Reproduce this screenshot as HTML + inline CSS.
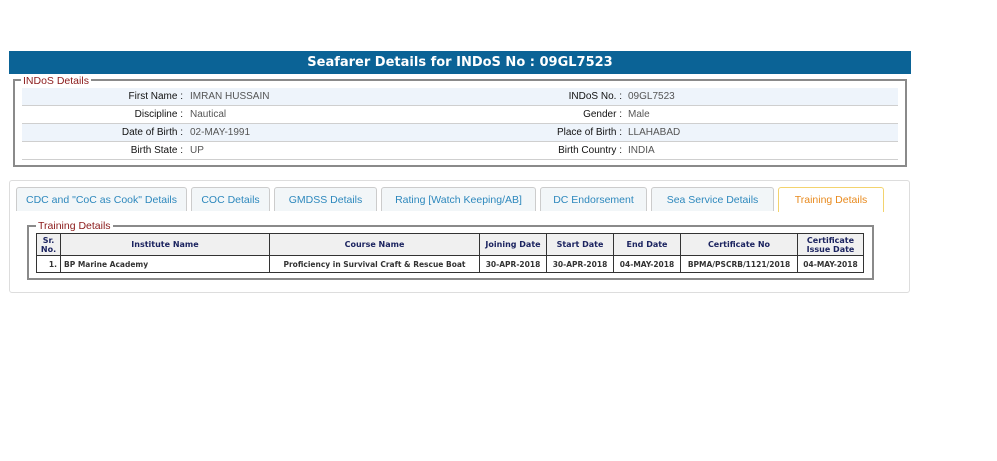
<!DOCTYPE html>
<html><head><meta charset="utf-8"><style>
*{margin:0;padding:0;box-sizing:border-box}
body{width:997px;height:461px;background:#fff;position:relative;font-family:"Liberation Sans",Arial,sans-serif;overflow:hidden}
.a{position:absolute}
.hdr{left:9px;top:51px;width:902px;height:23px;background:#0b6396;color:#fff;font:bold 13px "DejaVu Sans",sans-serif;text-align:center;line-height:23px}
.fs{border:2px solid #8a8a8a}
.leg{background:#fff;color:#8b1a1a;font-size:10.5px;padding:0 2px;line-height:12px}
.row{left:22px;width:876px;height:18px;border-bottom:1px solid #cfcfcf;font-size:10px;line-height:18px}
.row.b{background:#eef4fb}
.lb{position:absolute;text-align:right;color:#111}
.vl{position:absolute;color:#555}
.tabs{left:9px;top:180px;width:901px;height:113px;border:1px solid #ddd;border-radius:3px}
.tab{top:187px;height:24px;background:#f2f6f8;border:1px solid #ccc;border-bottom:none;border-radius:3px 3px 0 0;color:#2d88bd;font-size:10.5px;text-align:center;line-height:24px}
.tab.act{background:#fff;border-color:#f3d36e;color:#e88a1e;height:25px}
table{position:absolute;left:36px;top:233px;border-collapse:collapse;font-family:"DejaVu Sans",sans-serif;font-weight:bold}
td,th{border:1px solid #333;padding:0 3px}
th{background:#f0f0f0;color:#1c2460;font-size:8px;height:22px;line-height:9px}
td{font-size:7.5px;height:17px;color:#333;text-align:center}
</style></head><body>
<div class="a hdr">Seafarer Details for INDoS No : 09GL7523</div>
<div class="a fs" style="left:13px;top:79px;width:894px;height:88px"></div>
<div class="a leg" style="left:21px;top:75px">INDoS Details</div>
<div class="a row b" style="top:88px"><span class="lb" style="right:715px">First Name :</span><span class="vl" style="left:168px">IMRAN HUSSAIN</span><span class="lb" style="right:276px">INDoS No. :</span><span class="vl" style="left:606px">09GL7523</span></div>
<div class="a row" style="top:106px"><span class="lb" style="right:715px">Discipline :</span><span class="vl" style="left:168px">Nautical</span><span class="lb" style="right:276px">Gender :</span><span class="vl" style="left:606px">Male</span></div>
<div class="a row b" style="top:124px"><span class="lb" style="right:715px">Date of Birth :</span><span class="vl" style="left:168px">02-MAY-1991</span><span class="lb" style="right:276px">Place of Birth :</span><span class="vl" style="left:606px">LLAHABAD</span></div>
<div class="a row" style="top:142px"><span class="lb" style="right:715px">Birth State :</span><span class="vl" style="left:168px">UP</span><span class="lb" style="right:276px">Birth Country :</span><span class="vl" style="left:606px">INDIA</span></div>

<div class="a tabs"></div>
<div class="a tab" style="left:16px;width:171px">CDC and "CoC as Cook" Details</div>
<div class="a tab" style="left:191px;width:79px">COC Details</div>
<div class="a tab" style="left:274px;width:103px">GMDSS Details</div>
<div class="a tab" style="left:381px;width:155px">Rating [Watch Keeping/AB]</div>
<div class="a tab" style="left:540px;width:107px">DC Endorsement</div>
<div class="a tab" style="left:651px;width:123px">Sea Service Details</div>
<div class="a tab act" style="left:778px;width:106px">Training Details</div>

<div class="a fs" style="left:27px;top:225px;width:847px;height:55px"></div>
<div class="a leg" style="left:36px;top:220px">Training Details</div>
<table>
<tr><th style="width:24px">Sr.<br>No.</th><th style="width:209px">Institute Name</th><th style="width:210px">Course Name</th><th style="width:67px">Joining Date</th><th style="width:67px">Start Date</th><th style="width:67px">End Date</th><th style="width:117px">Certificate No</th><th style="width:66px">Certificate<br>Issue Date</th></tr>
<tr><td style="text-align:right">1.</td><td style="text-align:left">BP Marine Academy</td><td>Proficiency in Survival Craft &amp; Rescue Boat</td><td>30-APR-2018</td><td>30-APR-2018</td><td>04-MAY-2018</td><td>BPMA/PSCRB/1121/2018</td><td>04-MAY-2018</td></tr>
</table>
</body></html>
